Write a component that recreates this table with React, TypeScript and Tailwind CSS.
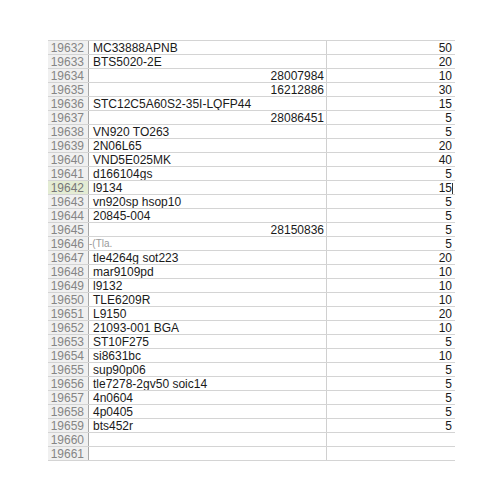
const rows: [number, string, string, string][] = [
  [19632, 'MC33888APNB', '', '50'],
  [19633, 'BTS5020-2E', '', '20'],
  [19634, '', '28007984', '10'],
  [19635, '', '16212886', '30'],
  [19636, 'STC12C5A60S2-35I-LQFP44', '', '15'],
  [19637, '', '28086451', '5'],
  [19638, 'VN920 TO263', '', '5'],
  [19639, '2N06L65', '', '20'],
  [19640, 'VND5E025MK', '', '40'],
  [19641, 'd166104gs', '', '5'],
  [19642, 'l9134', '', '15'],
  [19643, 'vn920sp hsop10', '', '5'],
  [19644, '20845-004', '', '5'],
  [19645, '', '28150836', '5'],
  [19646, '', '', '5'],
  [19647, 'tle4264g sot223', '', '20'],
  [19648, 'mar9109pd', '', '10'],
  [19649, 'l9132', '', '10'],
  [19650, 'TLE6209R', '', '10'],
  [19651, 'L9150', '', '20'],
  [19652, '21093-001 BGA', '', '10'],
  [19653, 'ST10F275', '', '5'],
  [19654, 'si8631bc', '', '10'],
  [19655, 'sup90p06', '', '5'],
  [19656, 'tle7278-2gv50 soic14', '', '5'],
  [19657, '4n0604', '', '5'],
  [19658, '4p0405', '', '5'],
  [19659, 'bts452r', '', '5'],
  [19660, '', '', ''],
  [19661, '', '', ''],
];

export default function App() {
  return (
    <div className="w-[500px] h-[500px] bg-white pt-[40px] pl-[48px] font-['Liberation_Sans',Arial,sans-serif]">
      <div className="flex flex-col border-t border-[#d4d4d4] w-[407px]">
        {rows.map(([num, a, aNum, b]) => {
          const active = num === 19642;
          return (
            <div key={num} className="flex h-[14px] border-b border-[#d4d4d4]">
              {/* row header */}
              <div
                className={
                  active
                    ? 'w-[41px] shrink-0 bg-[#e4ecd4] border-r border-[#a8a8a8] text-right pr-[4px] text-[12px] leading-[14px] text-[#777]'
                    : 'w-[41px] shrink-0 bg-[#f0f0f0] border-r border-[#a8a8a8] text-right pr-[4px] text-[12px] leading-[14px] text-[#858585]'
                }
              >
                {num}
              </div>
              {/* column A */}
              <div className="w-[238px] shrink-0 border-r border-[#d0d0d0] flex items-center pl-[4px] pr-[2px] text-[12px] leading-[14px] text-[#1a1a1a] whitespace-nowrap overflow-hidden">
                {num === 19646 ? (
                  <span className="text-[10px] text-[#9a9a9a] -ml-[4px]">-(Tla.</span>
                ) : aNum ? (
                  <span className="ml-auto">{aNum}</span>
                ) : (
                  <span>{a}</span>
                )}
              </div>
              {/* column B */}
              <div className="w-[128px] shrink-0 relative text-right pr-[3px] text-[12px] leading-[14px] text-[#1a1a1a]">
                {b}
                {active && <span className="absolute right-[2px] top-[2px] w-px h-[11px] bg-[#333]" />}
              </div>
            </div>
          );
        })}
      </div>
    </div>
  );
}
